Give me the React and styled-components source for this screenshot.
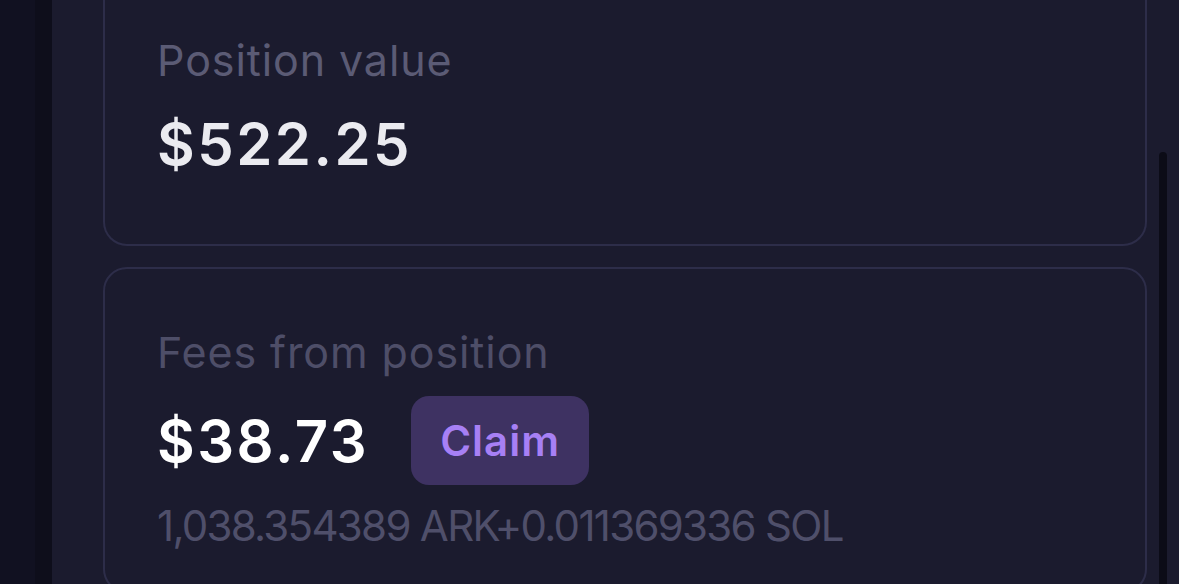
import React from "react";
import styled, { createGlobalStyle } from "styled-components";

const Global = createGlobalStyle`
  html, body { margin: 0; padding: 0; background: #1b1b2e; overflow: hidden; }
  body { font-family: Inter, "Noto Sans", sans-serif; -webkit-font-smoothing: antialiased; }
`;

const Shell = styled.div`
  display: flex;
  height: 584px;
  width: 1179px;
  overflow: hidden;
`;

const SideRail = styled.div`
  width: 35px;
  flex: none;
  background: #111121;
`;

const RailEdge = styled.div`
  width: 17px;
  flex: none;
  background: #0e0e1b;
`;

const Main = styled.main`
  flex: 1;
  display: flex;
  background: #1b1b2e;
  padding-left: 51px;
`;

const CardList = styled.div`
  flex: 1;
  display: flex;
  flex-direction: column;
  gap: 21px;
`;

const Card = styled.section`
  border: 2px solid #2d2d49;
  border-radius: 24px;
  padding: ${(p) => p.$pad};
  display: flex;
  flex-direction: column;
  flex: none;
  ${(p) => p.$cut && `border-top: none; border-top-left-radius: 0; border-top-right-radius: 0;`}
`;

const Label = styled.div`
  font-size: 43px;
  line-height: 50px;
  color: ${(p) => p.$color};
  font-weight: 400;
  letter-spacing: 0.9px;
`;

const Value = styled.div`
  font-size: 58px;
  line-height: 64px;
  font-weight: 600;
  color: ${(p) => p.$color};
  letter-spacing: 2.5px;
  margin-top: ${(p) => p.$mt || "0"};
`;

const ValueRow = styled.div`
  display: flex;
  align-items: center;
  gap: 42px;
  margin-top: ${(p) => p.$mt};
`;

const ClaimButton = styled.button`
  border: none;
  background: #3e3262;
  color: #a780f5;
  font-family: inherit;
  font-size: 42px;
  font-weight: 600;
  letter-spacing: 1px;
  width: 178px;
  height: 89px;
  border-radius: 18px;
  padding: 0;
`;

const Sub = styled.div`
  margin-top: 16px;
  font-size: 42px;
  line-height: 50px;
  color: #4f4f6a;
  letter-spacing: -1.7px;
`;

const ScrollTrack = styled.div`
  width: 32px;
  flex: none;
  display: flex;
  justify-content: center;
  padding-top: 152px;
`;

const Thumb = styled.div`
  width: 8px;
  background: #0c0c17;
  border-radius: 4px 4px 0 0;
`;

export default function App() {
  return (
    <Shell>
      <Global />
      <SideRail />
      <RailEdge />
      <Main>
        <CardList>
          <Card $cut $pad="35px 52px 68px">
            <Label $color="#5b5b75">Position value</Label>
            <Value $color="#ebebf0" $mt="27px">$522.25</Value>
          </Card>
          <Card $pad="58px 52px 40px">
            <Label $color="#4e4e68">Fees from position</Label>
            <ValueRow $mt="19px">
              <Value $color="#ffffff">$38.73</Value>
              <ClaimButton>Claim</ClaimButton>
            </ValueRow>
            <Sub>1,038.354389 ARK+0.011369336 SOL</Sub>
          </Card>
        </CardList>
        <ScrollTrack>
          <Thumb />
        </ScrollTrack>
      </Main>
    </Shell>
  );
}
